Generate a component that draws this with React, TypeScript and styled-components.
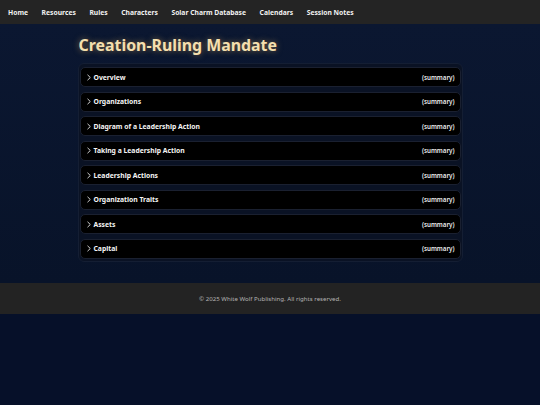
import React from "react";
import styled, { createGlobalStyle } from "styled-components";

const Global = createGlobalStyle`
  html, body {
    margin: 0;
    padding: 0;
    background: #061029;
    font-family: "Noto Sans", "Open Sans", sans-serif;
  }
  * { box-sizing: border-box; }
`;

const NavBar = styled.nav`
  height: 24px;
  background: #242424;
  display: flex;
  align-items: center;
  gap: 13.6px;
  padding: 0 8px;
`;

const NavLink = styled.a`
  color: #f2f2f2;
  font-size: 6.75px;
  font-weight: 700;
  text-decoration: none;
  white-space: nowrap;
`;

const Main = styled.main`
  background: linear-gradient(#0b1731, #081329);
  padding: 10px 0 21px;
`;

const Column = styled.div`
  width: 385px;
  margin: 0 auto;
`;

const Title = styled.h1`
  margin: 0 0 7px 1px;
  font-size: 15.9px;
  font-weight: 700;
  line-height: 22px;
  color: #f4dfae;
  text-shadow: 0 0 6px rgba(230, 180, 90, 0.55);
`;

const Panel = styled.section`
  border: 1px solid #141e33;
  border-radius: 6px;
  background: #0a1224;
  padding: 3px 1px 2px;
  display: flex;
  flex-direction: column;
  gap: 4.5px;
`;

const Item = styled.div`
  height: 20px;
  background: #000;
  border: 1px solid #1a2030;
  border-radius: 5px;
  display: flex;
  align-items: center;
  padding: 0 5px 0 5px;
`;

const Chevron = styled.svg`
  width: 6px;
  height: 7px;
  margin-right: 2px;
  flex: none;
`;

const Label = styled.span`
  color: #f5f5f5;
  font-size: 6.8px;
  font-weight: 700;
  flex: 1;
`;

const Summary = styled.span`
  color: #ededed;
  font-size: 6.2px;
  font-weight: 600;
`;

const Footer = styled.footer`
  height: 31px;
  background: #232323;
  display: flex;
  align-items: center;
  justify-content: center;
  color: #b3b3b3;
  font-size: 6.1px;
`;

const links = [
  "Home",
  "Resources",
  "Rules",
  "Characters",
  "Solar Charm Database",
  "Calendars",
  "Session Notes",
];

const sections = [
  "Overview",
  "Organizations",
  "Diagram of a Leadership Action",
  "Taking a Leadership Action",
  "Leadership Actions",
  "Organization Traits",
  "Assets",
  "Capital",
];

export default function App() {
  return (
    <>
      <Global />
      <NavBar>
        {links.map((l) => (
          <NavLink key={l} href="#">
            {l}
          </NavLink>
        ))}
      </NavBar>
      <Main>
        <Column>
          <Title>Creation-Ruling Mandate</Title>
          <Panel>
            {sections.map((s) => (
              <Item key={s}>
                <Chevron viewBox="0 0 6 7">
                  <path d="M1.5 0.8 L4.3 3.5 L1.5 6.2" fill="none" stroke="#e8e8e8" strokeWidth="0.9" />
                </Chevron>
                <Label>{s}</Label>
                <Summary>(summary)</Summary>
              </Item>
            ))}
          </Panel>
        </Column>
      </Main>
      <Footer>© 2025 White Wolf Publishing. All rights reserved.</Footer>
    </>
  );
}
